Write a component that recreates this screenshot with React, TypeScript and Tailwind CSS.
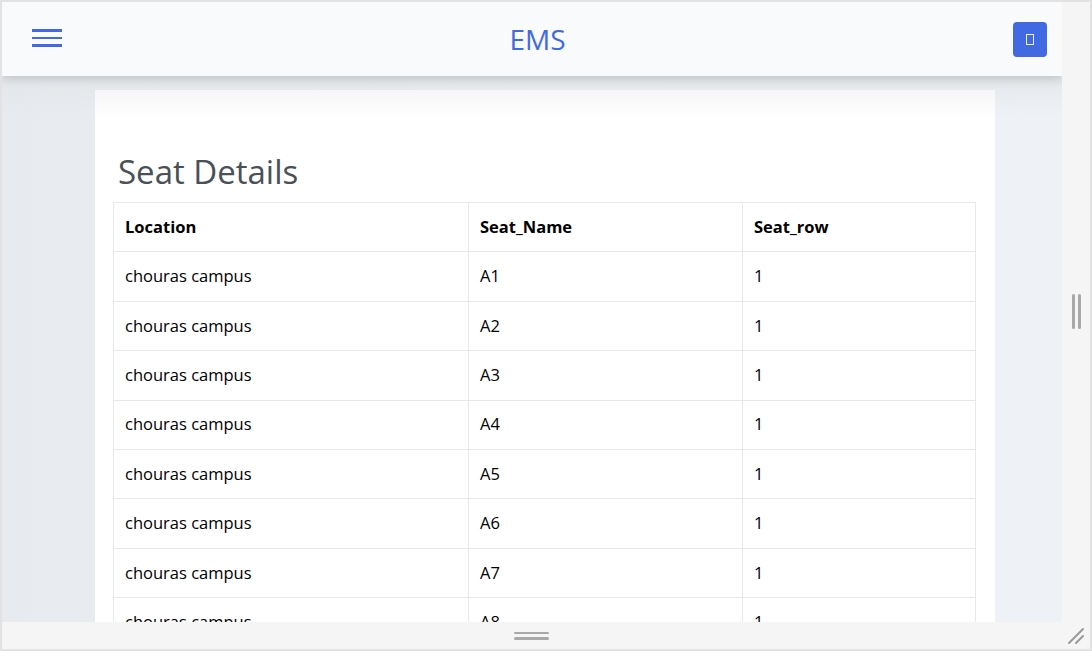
import React from 'react';

const rows = ['A1', 'A2', 'A3', 'A4', 'A5', 'A6', 'A7', 'A8'];

export default function App() {
  return (
    <div className="w-[1092px] h-[651px] border-2 border-[#e2e2e2] bg-[#f5f5f5] flex flex-col overflow-hidden" style={{ fontFamily: '"Open Sans", "Noto Sans", sans-serif' }}>
      <div className="flex h-[620px]">
        {/* viewport */}
        <div className="w-[1060px] h-[620px] relative overflow-hidden bg-gradient-to-r from-[#e7eaee] via-[#eef1f4] to-[#eef2f6]">
          <header className="relative z-10 h-[74px] bg-[#f9fafc] shadow-[0_2px_10px_rgba(0,0,0,0.18)] flex items-center px-[30px]">
            <button className="flex flex-col gap-[5px] w-[30px] mt-[-2px]">
              <span className="block h-[2.5px] bg-[#4169e1]"></span>
              <span className="block h-[2.5px] bg-[#4169e1]"></span>
              <span className="block h-[2.5px] bg-[#4169e1]"></span>
            </button>
            <div className="flex-1 text-center text-[28px] text-[#4169e1] leading-none mt-[0px]">EMS</div>
            <button className="w-[34px] h-[35px] rounded-[4px] bg-[#4169e1] flex items-center justify-center mr-[-15px] mt-[1px]">
              <span className="block w-[8px] h-[11px] border border-white/90"></span>
            </button>
          </header>
          <div className="bg-gradient-to-b from-[#e4e7ea] to-transparent h-[40px] absolute top-[74px] left-0 right-0"></div>
          <main className="relative ml-[93px] mt-[14px] w-[900px] bg-white h-[600px]">
            <div className="h-[30px] bg-gradient-to-b from-[#f6f6f7] to-white"></div>
            <div className="px-[18px] pt-[35px]">
              <h1 className="text-[33px] text-[#495057] leading-none pl-[5px] pb-[14px]">Seat Details</h1>
              <table className="w-[863px] border-collapse text-[16.5px] text-black">
                <thead>
                  <tr>
                    <th className="w-[355px] border border-[#e6e8eb] text-left font-bold px-[11px] h-[49.4px]">Location</th>
                    <th className="w-[274px] border border-[#e6e8eb] text-left font-bold px-[11px] h-[49.4px]">Seat_Name</th>
                    <th className="border border-[#e6e8eb] text-left font-bold px-[11px] h-[49.4px]">Seat_row</th>
                  </tr>
                </thead>
                <tbody>
                  {rows.map((r) => (
                    <tr key={r}>
                      <td className="border border-[#e6e8eb] px-[11px] h-[49.4px]">chouras campus</td>
                      <td className="border border-[#e6e8eb] px-[11px] h-[49.4px]">{r}</td>
                      <td className="border border-[#e6e8eb] px-[11px] h-[49.4px]">1</td>
                    </tr>
                  ))}
                </tbody>
              </table>
            </div>
          </main>
        </div>
        {/* right resize strip */}
        <div className="w-[28px] flex items-center justify-center gap-[3px] pb-[2px]">
          <span className="block w-[3px] h-[35px] bg-[#a8a8a8] rounded-sm"></span>
          <span className="block w-[3px] h-[35px] bg-[#a8a8a8] rounded-sm"></span>
        </div>
      </div>
      {/* bottom resize strip */}
      <div className="relative flex-1 flex flex-col items-center justify-center gap-[3px] pr-[28px]">
        <span className="block w-[35px] h-[2.5px] bg-[#a8a8a8] rounded-sm ml-[-2px]"></span>
        <span className="block w-[35px] h-[2.5px] bg-[#a8a8a8] rounded-sm ml-[-2px]"></span>
        <svg className="absolute right-[5px] bottom-[4px]" width="18" height="18" viewBox="0 0 18 18">
          <path d="M2 16 L16 2 M9 16 L16 9" stroke="#9a9a9a" strokeWidth="2" strokeLinecap="round" />
        </svg>
      </div>
    </div>
  );
}
